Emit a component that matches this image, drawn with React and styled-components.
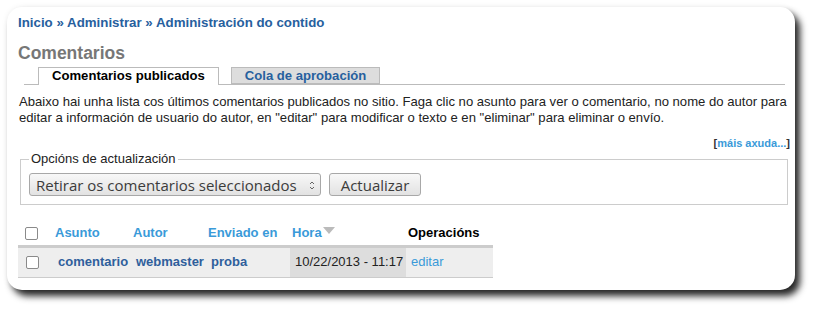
import styled, { createGlobalStyle } from "styled-components";

const GlobalStyle = createGlobalStyle`
  html, body {
    margin: 0;
    background: #ffffff;
  }
  body {
    font-family: "Liberation Sans", Arial, sans-serif;
    font-size: 13px;
    color: #222;
  }
`;

const Page = styled.div`
  padding: 7px 0 0 7px;
  width: 818px;
  height: 314px;
  box-sizing: border-box;
`;

const Card = styled.div`
  width: 788px;
  height: 283px;
  box-sizing: border-box;
  background: #fff;
  border-radius: 15px;
  box-shadow: 5px 6px 7px rgba(0, 0, 0, 0.85), 0 0 6px rgba(0, 0, 0, 0.06);
  padding: 8px 5px 0 11px;
`;

const Breadcrumb = styled.div`
  font-weight: bold;
  font-size: 13.3px;
  line-height: 16px;
  color: #27609e;

  a {
    color: inherit;
    text-decoration: none;
  }
`;

const Title = styled.h2`
  margin: 12px 0 0;
  font-size: 17.5px;
  line-height: 20px;
  color: #777;
`;

const TabList = styled.ul`
  display: flex;
  list-style: none;
  margin: 4px 0 0 6px;
  padding: 0 0 0 14px;
  width: 747px;
  border-bottom: 1px solid #bbb;
  gap: 12px;
`;

const Tab = styled.li`
  box-sizing: border-box;
  height: ${(p) => (p.$active ? "18px" : "17px")};
  margin-bottom: ${(p) => (p.$active ? "-1px" : "0")};
  padding: 0 13px;
  border: 1px solid #bbb;
  border-bottom: ${(p) => (p.$active ? "none" : "1px solid #bbb")};
  background: ${(p) => (p.$active ? "#fff" : "#ddd")};
  color: ${(p) => (p.$active ? "#000" : "#27609e")};
  font-weight: bold;
  font-size: 13.1px;
  line-height: 16px;
`;

const Intro = styled.p`
  margin: 9px 0 0 1px;
  font-size: 13.1px;
  line-height: 16px;
  width: 772px;
`;

const Help = styled.div`
  margin: 10px 0 0 0;
  text-align: right;
  font-size: 11px;
  font-weight: bold;
  line-height: 14px;
  color: #333;

  a {
    color: #3a9ad9;
    text-decoration: none;
  }
`;

const Fieldset = styled.fieldset`
  margin: 1px 0 0 2px;
  width: 768px;
  box-sizing: border-box;
  border: 1px solid #ccc;
  padding: 6px 8px 8px;
  display: flex;
  gap: 8px;

  legend {
    padding: 0 2px;
    margin-left: 0;
    line-height: 16px;
  }
`;

const SelectBox = styled.div`
  position: relative;
  width: 292px;
`;

const NativeSelect = styled.select`
  appearance: none;
  width: 100%;
  height: 23px;
  box-sizing: border-box;
  border: 1px solid #a8a8a8;
  border-radius: 3px;
  background: linear-gradient(#f8f8f8, #e2e2e2);
  font-family: "Open Sans", "DejaVu Sans", sans-serif;
  font-size: 15px;
  color: #3c3c3c;
  padding: 0 0 0 6px;
  margin: 0;
`;

const Arrows = styled.svg`
  position: absolute;
  right: 6px;
  top: 8px;
  pointer-events: none;
`;

const Button = styled.button`
  width: 92px;
  height: 23px;
  box-sizing: border-box;
  border: 1px solid #a8a8a8;
  border-radius: 3px;
  background: linear-gradient(#f8f8f8, #e2e2e2);
  font-family: "Open Sans", "DejaVu Sans", sans-serif;
  font-size: 15px;
  color: #3c3c3c;
  padding: 0;
  margin: 0;
`;

const Table = styled.table`
  margin: 14px 0 0 0;
  width: 475px;
  border-collapse: collapse;
  table-layout: fixed;
`;

const Th = styled.th`
  text-align: left;
  font-weight: bold;
  padding: 6px 0 4px 2px;
  line-height: 16px;
  color: ${(p) => (p.$plain ? "#000" : "#3a9ad9")};
  border-bottom: 3px solid #ccc;
  white-space: nowrap;
`;

const Row = styled.tr`
  background: #eee;
  border-bottom: 1px solid #ccc;
`;

const Td = styled.td`
  padding: 6px 0 7px 5px;
  line-height: 16px;
  white-space: nowrap;
  background: ${(p) => (p.$active ? "#ddd" : "transparent")};
  font-weight: ${(p) => (p.$bold ? "bold" : "normal")};
  color: ${(p) => (p.$link ? "#2f5f9c" : p.$light ? "#3a9ad9" : "#222")};
`;

const Check = styled.span`
  display: inline-block;
  width: 11px;
  height: 11px;
  border: 1px solid #8a8a8a;
  border-radius: 2px;
  background: #fff;
  vertical-align: middle;
  margin-left: ${(p) => p.$offset || 0}px;
`;

const SortArrow = styled.span`
  display: inline-block;
  width: 0;
  height: 0;
  border-left: 6px solid transparent;
  border-right: 6px solid transparent;
  border-top: 7px solid #bbb;
  margin-left: 1px;
  vertical-align: 3px;
`;

export default function App() {
  return (
    <>
      <GlobalStyle />
      <Page>
        <Card>
          <Breadcrumb>
            <a href="#">Inicio</a> » <a href="#">Administrar</a> »{" "}
            <a href="#">Administración do contido</a>
          </Breadcrumb>
          <Title>Comentarios</Title>
          <TabList>
            <Tab $active>Comentarios publicados</Tab>
            <Tab>Cola de aprobación</Tab>
          </TabList>
          <Intro>
            Abaixo hai unha lista cos últimos comentarios publicados no sitio.
            Faga clic no asunto para ver o comentario, no nome do autor para
            editar a información de usuario do autor, en "editar" para
            modificar o texto e en "eliminar" para eliminar o envío.
          </Intro>
          <Help>
            [<a href="#">máis axuda...</a>]
          </Help>
          <Fieldset>
            <legend>Opcións de actualización</legend>
            <SelectBox>
              <NativeSelect defaultValue="unpublish">
                <option value="unpublish">Retirar os comentarios seleccionados</option>
                <option value="delete">Eliminar os comentarios seleccionados</option>
              </NativeSelect>
              <Arrows width="6" height="9" viewBox="0 0 6 9">
                <path d="M1 3 L3 1 L5 3" fill="none" stroke="#666" strokeWidth="1" />
                <path d="M1 6 L3 8 L5 6" fill="none" stroke="#666" strokeWidth="1" />
              </Arrows>
            </SelectBox>
            <Button>Actualizar</Button>
          </Fieldset>
          <Table>
            <colgroup>
              <col style={{ width: 35 }} />
              <col style={{ width: 78 }} />
              <col style={{ width: 75 }} />
              <col style={{ width: 84 }} />
              <col style={{ width: 116 }} />
              <col style={{ width: 87 }} />
            </colgroup>
            <thead>
              <tr>
                <Th>
                  <Check $offset={5} />
                </Th>
                <Th>Asunto</Th>
                <Th>Autor</Th>
                <Th>Enviado en</Th>
                <Th>
                  Hora
                  <SortArrow />
                </Th>
                <Th $plain>Operacións</Th>
              </tr>
            </thead>
            <tbody>
              <Row>
                <Td>
                  <Check $offset={3} />
                </Td>
                <Td $bold $link>comentario</Td>
                <Td $bold $link>webmaster</Td>
                <Td $bold $link>proba</Td>
                <Td $active>10/22/2013 - 11:17</Td>
                <Td $light>editar</Td>
              </Row>
            </tbody>
          </Table>
        </Card>
      </Page>
    </>
  );
}
